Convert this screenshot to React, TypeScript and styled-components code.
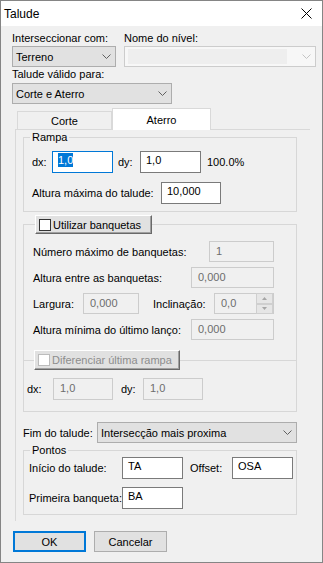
import styled, { createGlobalStyle } from "styled-components";

type BoxState = "normal" | "focused" | "disabled";

const GlobalStyle = createGlobalStyle`
  html, body {
    margin: 0;
    padding: 0;
    background: #f0f0f0;
  }
  body {
    font-family: "Liberation Sans", Arial, sans-serif;
    font-size: 11px;
    color: #000;
  }
  * {
    box-sizing: border-box;
  }
`;

const Window = styled.div`
  width: 323px;
  height: 563px;
  border: 1px solid #858585;
  background: #f0f0f0;
  display: flex;
  flex-direction: column;
  overflow: hidden;
`;

const TitleBar = styled.div`
  flex: none;
  height: 25px;
  background: #fff;
  display: flex;
  align-items: center;
  justify-content: space-between;
  padding: 0 10px 0 3px;
  font-size: 12px;
`;

const Body = styled.div`
  padding: 5px 0 0 11px;
  display: flex;
  flex-direction: column;
  align-items: flex-start;
`;

const TopRow = styled.div`
  display: grid;
  grid-template-columns: 104px 192px;
  column-gap: 8px;
`;

const Column = styled.div`
  display: flex;
  flex-direction: column;
`;

const Caption = styled.div`
  line-height: 14px;
  white-space: nowrap;
`;

const Combo = styled.div<{ $w: number; $mt?: number; $disabled?: boolean }>`
  flex: none;
  width: ${(p) => p.$w}px;
  height: 21px;
  margin-top: ${(p) => p.$mt ?? 0}px;
  display: flex;
  align-items: center;
  justify-content: space-between;
  border: 1px solid ${(p) => (p.$disabled ? "#cccccc" : "#adadad")};
  background: ${(p) => (p.$disabled ? "#f7f7f7" : "#e1e1e1")};
  padding: ${(p) => (p.$disabled ? "2px 4px 2px 3px" : "0 4px 0 3px")};
  white-space: nowrap;
`;

const ComboField = styled.div`
  align-self: stretch;
  flex: 1;
  margin-right: 15px;
  background: #eeeeee;
`;

const TabStrip = styled.div`
  display: flex;
  align-items: flex-end;
  margin-top: 4px;
  padding-left: 5px;
  height: 21px;
`;

const Tab = styled.div<{ $active?: boolean }>`
  width: ${(p) => (p.$active ? 99 : 95)}px;
  height: ${(p) => (p.$active ? 22 : 18)}px;
  margin-bottom: ${(p) => (p.$active ? -1 : 0)}px;
  position: relative;
  z-index: ${(p) => (p.$active ? 1 : 0)};
  background: ${(p) => (p.$active ? "#fff" : "#f0f0f0")};
  border: 1px solid #d9d9d9;
  border-bottom: none;
  display: flex;
  align-items: center;
  justify-content: center;
`;

const TabPanel = styled.div`
  margin-left: 3px;
  width: 295px;
  border-top: 1px solid #d9d9d9;
  border-left: 1px solid #d9d9d9;
  padding: 0 0 6px 7px;
  display: flex;
  flex-direction: column;
  align-items: flex-start;
`;

const GroupBox = styled.fieldset<{
  $pl: number;
  $pr: number;
  $pt: number;
  $pb: number;
  $mt?: number;
}>`
  margin: ${(p) => p.$mt ?? 0}px 0 0 0;
  width: 274px;
  min-inline-size: 0;
  border: 1px solid #d7d7d7;
  padding: ${(p) => `${p.$pt}px ${p.$pr}px ${p.$pb}px ${p.$pl}px`};
  display: flex;
  flex-direction: column;
`;

const Legend = styled.legend<{ $ml: number; $lh?: number }>`
  margin-left: ${(p) => p.$ml}px;
  padding: 0 2px;
  line-height: ${(p) => p.$lh ?? 14}px;
`;

const ButtonLegend = styled.legend<{ $ml: number }>`
  margin-left: ${(p) => p.$ml}px;
  padding: 0;
`;

const FormRow = styled.div<{ $h: number; $mt?: number; $ml?: number; $spread?: boolean }>`
  display: flex;
  align-items: center;
  height: ${(p) => p.$h}px;
  margin-top: ${(p) => p.$mt ?? 0}px;
  margin-left: ${(p) => p.$ml ?? 0}px;
  justify-content: ${(p) => (p.$spread ? "space-between" : "flex-start")};
`;

const Label = styled.span<{ $w?: number; $ml?: number; $muted?: boolean }>`
  flex: none;
  width: ${(p) => (p.$w ? `${p.$w}px` : "auto")};
  margin-left: ${(p) => p.$ml ?? 0}px;
  color: ${(p) => (p.$muted ? "#8a8a8a" : "#000")};
  white-space: nowrap;
`;

const TextBox = styled.div<{ $w: number; $h: number; $state?: BoxState }>`
  flex: none;
  width: ${(p) => p.$w}px;
  height: ${(p) => p.$h}px;
  border: 1px solid
    ${(p) =>
      p.$state === "focused" ? "#0078d7" : p.$state === "disabled" ? "#cccccc" : "#7a7a7a"};
  background: ${(p) => (p.$state === "disabled" ? "#f0f0f0" : "#fff")};
  color: ${(p) => (p.$state === "disabled" ? "#6d6d6d" : "#000")};
  padding: ${(p) => (p.$state === "disabled" ? "2px 0 0 6px" : "1px 0 0 5px")};
  line-height: 14px;
  display: flex;
  white-space: nowrap;
`;

const Selected = styled.span`
  background: #0078d7;
  color: #fff;
  height: 14px;
`;

const SpinText = styled.span`
  flex: 1;
`;

const SpinColumn = styled.div`
  width: 17px;
  margin: -3px 0 0 0;
  display: flex;
  flex-direction: column;
  align-self: stretch;
  height: 21px;
  margin-top: -3px;
`;

const SpinArrow = styled.div`
  flex: 1;
  background: #e6e6e6;
  border: 1px solid #cfcfcf;
  display: flex;
  align-items: center;
  justify-content: center;
`;

const CheckButton = styled.div<{ $w: number; $h: number; $disabled?: boolean }>`
  width: ${(p) => p.$w}px;
  height: ${(p) => p.$h}px;
  display: flex;
  align-items: center;
  gap: 2px;
  padding-left: 3px;
  background: #e1e1e1;
  border: 1px solid;
  border-color: #ffffff #696969 #696969 #ffffff;
  box-shadow: inset -1px -1px 0 #a0a0a0;
  color: ${(p) => (p.$disabled ? "#8d8d8d" : "#000")};
  white-space: nowrap;
`;

const CheckSquare = styled.span<{ $disabled?: boolean }>`
  flex: none;
  width: 12px;
  height: 12px;
  background: #fff;
  border: 1px solid ${(p) => (p.$disabled ? "#bcbcbc" : "#333333")};
`;

const Divider = styled.div`
  display: flex;
  align-items: center;
  margin: 10px -22px 0 -9px;

  &::before {
    content: "";
    width: 10px;
    height: 1px;
    background: #d7d7d7;
  }

  &::after {
    content: "";
    flex: 1;
    height: 1px;
    background: #d7d7d7;
  }
`;

const ButtonRow = styled.div`
  display: flex;
  gap: 8px;
  margin: 10px 0 0 1px;
`;

const PushButton = styled.div<{ $default?: boolean }>`
  width: 73px;
  height: 21px;
  background: #e1e1e1;
  border: ${(p) => (p.$default ? "2px solid #0078d7" : "1px solid #adadad")};
  display: flex;
  align-items: center;
  justify-content: center;
`;

function Chevron({ color = "#606060" }: { color?: string }) {
  return (
    <svg width="9" height="5" viewBox="0 0 9 5">
      <polyline points="0.5,0.5 4.5,4.5 8.5,0.5" fill="none" stroke={color} strokeWidth="1" />
    </svg>
  );
}

function Arrow({ up }: { up?: boolean }) {
  return (
    <svg width="5" height="3" viewBox="0 0 5 3">
      <polygon points={up ? "0,3 5,3 2.5,0" : "0,0 5,0 2.5,3"} fill="#a6a6a6" />
    </svg>
  );
}

function CloseIcon() {
  return (
    <svg width="11" height="11" viewBox="0 0 11 11">
      <path d="M0.5 0.5 L10.5 10.5 M10.5 0.5 L0.5 10.5" stroke="#000" strokeWidth="1" />
    </svg>
  );
}

function App() {
  return (
    <>
      <GlobalStyle />
      <Window>
        <TitleBar>
          <span>Talude</span>
          <CloseIcon />
        </TitleBar>

        <Body>
          <TopRow>
            <Column>
              <Caption>Interseccionar com:</Caption>
              <Combo $w={104} $mt={1}>
                <span>Terreno</span>
                <Chevron />
              </Combo>
            </Column>
            <Column>
              <Caption>Nome do nível:</Caption>
              <Combo $w={192} $mt={1} $disabled>
                <ComboField />
                <Chevron color="#c4c4c4" />
              </Combo>
            </Column>
          </TopRow>

          <Caption>Talude válido para:</Caption>
          <Combo $w={160} $mt={2}>
            <span>Corte e Aterro</span>
            <Chevron />
          </Combo>

          <TabStrip>
            <Tab>Corte</Tab>
            <Tab $active>Aterro</Tab>
          </TabStrip>

          <TabPanel>
            <GroupBox $pl={8} $pr={8} $pt={7} $pb={7}>
              <Legend $ml={-2}>Rampa</Legend>
              <FormRow $h={22}>
                <Label $w={20}>dx:</Label>
                <TextBox $w={61} $h={22} $state="focused">
                  <Selected>1,0</Selected>
                </TextBox>
                <Label $w={22} $ml={5}>dy:</Label>
                <TextBox $w={61} $h={22}>1,0</TextBox>
                <Label $ml={6}>100.0%</Label>
              </FormRow>
              <FormRow $h={22} $mt={9}>
                <Label $w={129}>Altura máxima do talude:</Label>
                <TextBox $w={60} $h={22}>10,000</TextBox>
              </FormRow>
            </GroupBox>

            <GroupBox $pl={9} $pr={22} $pt={7} $pb={11} $mt={3}>
              <ButtonLegend $ml={2}>
                <CheckButton $w={117} $h={19}>
                  <CheckSquare />
                  Utilizar banquetas
                </CheckButton>
              </ButtonLegend>
              <FormRow $h={21} $spread>
                <Label>Número máximo de banquetas:</Label>
                <TextBox $w={65} $h={21} $state="disabled">1</TextBox>
              </FormRow>
              <FormRow $h={21} $mt={5} $spread>
                <Label>Altura entre as banquetas:</Label>
                <TextBox $w={83} $h={21} $state="disabled">0,000</TextBox>
              </FormRow>
              <FormRow $h={21} $mt={5}>
                <Label $w={50}>Largura:</Label>
                <TextBox $w={56} $h={21} $state="disabled">0,000</TextBox>
                <Label $w={61} $ml={14}>Inclinação:</Label>
                <TextBox $w={60} $h={21} $state="disabled">
                  <SpinText>0,0</SpinText>
                  <SpinColumn>
                    <SpinArrow>
                      <Arrow up />
                    </SpinArrow>
                    <SpinArrow>
                      <Arrow />
                    </SpinArrow>
                  </SpinColumn>
                </TextBox>
              </FormRow>
              <FormRow $h={21} $mt={5} $spread>
                <Label>Altura mínima do último lanço:</Label>
                <TextBox $w={83} $h={21} $state="disabled">0,000</TextBox>
              </FormRow>

              <Divider>
                <CheckButton $w={146} $h={20} $disabled>
                  <CheckSquare $disabled />
                  Diferenciar última rampa
                </CheckButton>
              </Divider>

              <FormRow $h={22} $mt={8} $ml={-6}>
                <Label $w={26}>dx:</Label>
                <TextBox $w={60} $h={22} $state="disabled">1,0</TextBox>
                <Label $w={22} $ml={8}>dy:</Label>
                <TextBox $w={60} $h={22} $state="disabled">1,0</TextBox>
              </FormRow>
            </GroupBox>

            <FormRow $h={21} $mt={10}>
              <Label $w={74}>Fim do talude:</Label>
              <Combo $w={200}>
                <span>Intersecção mais proxima</span>
                <Chevron />
              </Combo>
            </FormRow>

            <GroupBox $pl={5} $pr={5} $pt={1} $pb={5} $mt={1}>
              <Legend $ml={1} $lh={12}>
                Pontos
              </Legend>
              <FormRow $h={22}>
                <Label $w={93}>Início do talude:</Label>
                <TextBox $w={61} $h={22}>TA</TextBox>
                <Label $w={42} $ml={7}>Offset:</Label>
                <TextBox $w={61} $h={22}>OSA</TextBox>
              </FormRow>
              <FormRow $h={22} $mt={8}>
                <Label $w={93}>Primeira banqueta:</Label>
                <TextBox $w={61} $h={22}>BA</TextBox>
              </FormRow>
            </GroupBox>
          </TabPanel>

          <ButtonRow>
            <PushButton $default>OK</PushButton>
            <PushButton>Cancelar</PushButton>
          </ButtonRow>
        </Body>
      </Window>
    </>
  );
}

export default App;
